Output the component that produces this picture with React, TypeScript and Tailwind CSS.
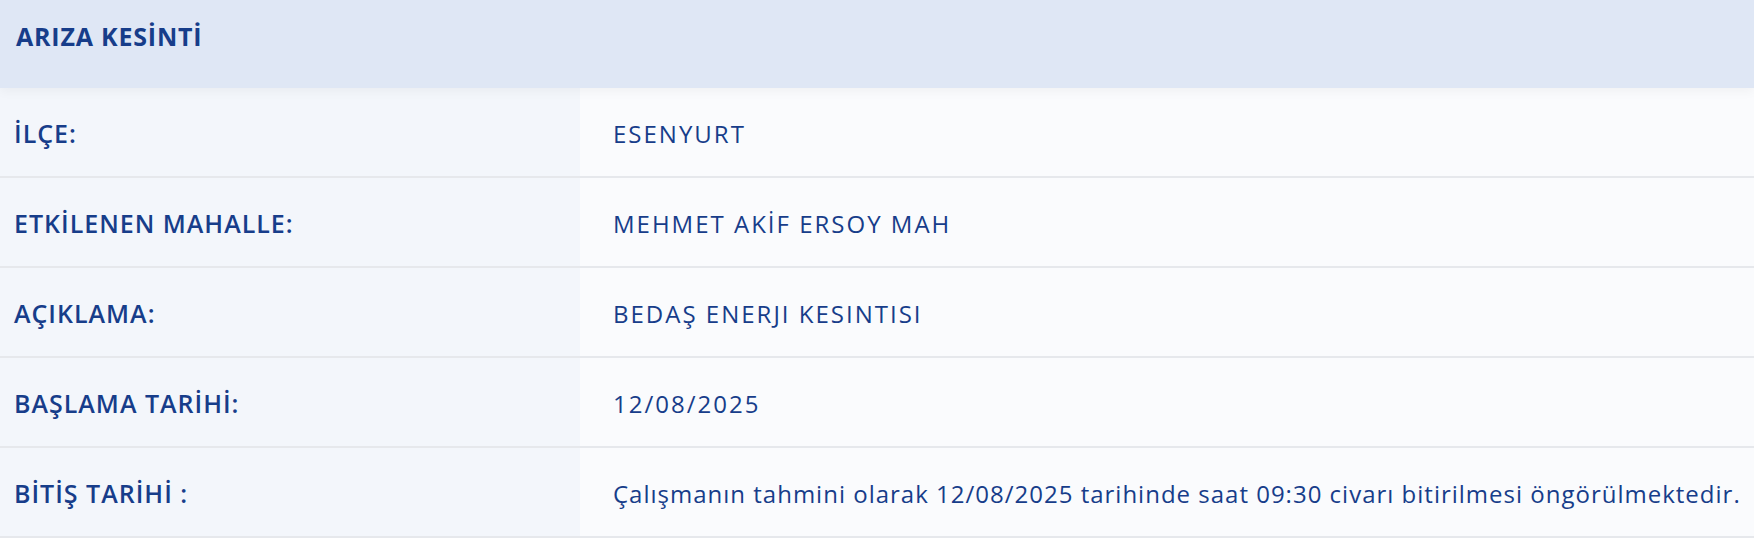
const rows: { label: string; value: string }[] = [
  { label: 'İLÇE:', value: 'ESENYURT' },
  { label: 'ETKİLENEN MAHALLE:', value: 'MEHMET AKİF ERSOY MAH' },
  { label: 'AÇIKLAMA:', value: 'BEDAŞ ENERJI KESINTISI' },
  { label: 'BAŞLAMA TARİHİ:', value: '12/08/2025' },
  {
    label: 'BİTİŞ TARİHİ :',
    value: 'Çalışmanın tahmini olarak 12/08/2025 tarihinde saat 09:30 civarı bitirilmesi öngörülmektedir.',
  },
]

export default function App() {
  return (
    <div className="w-[1754px] bg-[#fafbfd] font-['Open_Sans',sans-serif] text-[#173d8a]">
      <div className="relative z-10 h-[88px] bg-[#dfe7f5] pl-4 pt-[21px] shadow-[0_4px_10px_rgba(0,0,0,0.04)]">
        <h1 className="text-[25px] font-bold leading-[30px] tracking-[0.8px]">ARIZA KESİNTİ</h1>
      </div>

      {rows.map((row) => {
        const caps = row.value === row.value.toUpperCase()
        return (
          <div
            key={row.label}
            className="grid h-[90px] grid-cols-[580px_1fr] border-b-2 border-[#e6e8ec] first:h-[92px]"
          >
            <div className="flex items-center bg-[#f3f6fb] pl-[14px] pt-[3px] text-[25px] font-semibold tracking-[1px]">
              {row.label}
            </div>
            <div
              className={
                caps
                  ? 'flex items-center pl-[33px] pt-[3px] text-[24px] tracking-[2px]'
                  : 'flex items-center pl-[33px] pt-[3px] text-[24px] tracking-[1px]'
              }
            >
              {row.value}
            </div>
          </div>
        )
      })}
    </div>
  )
}
